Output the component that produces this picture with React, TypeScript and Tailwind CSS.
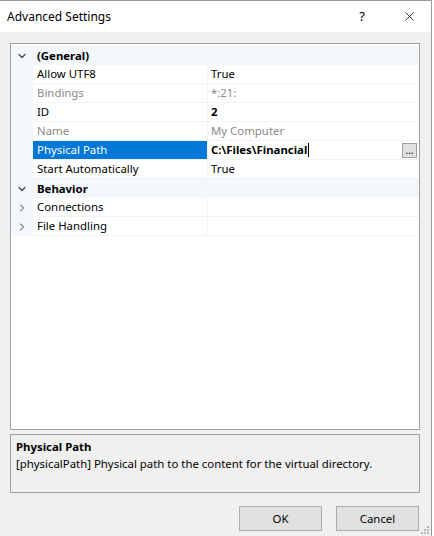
import { ChevronDown, ChevronRight, X } from 'lucide-react';

type Row =
  | { kind: 'cat'; label: string }
  | { kind: 'item'; name: string; value?: string; dim?: boolean; bold?: boolean; selected?: boolean; expand?: boolean };

const rows: Row[] = [
  { kind: 'cat', label: '(General)' },
  { kind: 'item', name: 'Allow UTF8', value: 'True' },
  { kind: 'item', name: 'Bindings', value: '*:21:', dim: true },
  { kind: 'item', name: 'ID', value: '2', bold: true },
  { kind: 'item', name: 'Name', value: 'My Computer', dim: true },
  { kind: 'item', name: 'Physical Path', value: 'C:\\Files\\Financial', selected: true, bold: true },
  { kind: 'item', name: 'Start Automatically', value: 'True' },
  { kind: 'cat', label: 'Behavior' },
  { kind: 'item', name: 'Connections', expand: true },
  { kind: 'item', name: 'File Handling', expand: true },
];

function GridRow({ row }: { row: Row }) {
  if (row.kind === 'cat') {
    return (
      <div className="flex h-[19px] items-center bg-[#f3f6fb]">
        <div className="flex w-[22px] justify-center">
          <ChevronDown size={12} strokeWidth={2.6} className="text-[#4a4a4a]" />
        </div>
        <span className="pl-[4px] font-bold text-black">{row.label}</span>
      </div>
    );
  }
  return (
    <div className="flex h-[19px]">
      <div className="flex w-[22px] items-center justify-center bg-[#f3f6fb]">
        {row.expand && <ChevronRight size={12} strokeWidth={2.2} className="text-[#8c8c8c]" />}
      </div>
      <div
        className={`flex w-[174px] items-center border-b border-[#f0f3f8] pl-[4px] ${
          row.selected ? 'bg-[#0078d7] text-white' : row.dim ? 'text-[#8a8a8a]' : 'text-black'
        }`}
      >
        {row.name}
      </div>
      <div className="w-px bg-[#f0f3f8]" />
      <div
        className={`flex flex-1 items-center border-b border-[#f0f3f8] pl-[3px] ${
          row.dim ? 'text-[#8a8a8a]' : 'text-black'
        } ${row.bold ? 'font-bold' : ''}`}
      >
        <span>{row.value}</span>
        {row.selected && <span className="ml-[1px] h-[14px] w-px bg-black" />}
        {row.selected && (
          <span className="ml-auto mr-[2px] flex h-[15px] w-[15px] items-end justify-center border border-[#a0a0a0] bg-[#e1e1e1] pb-[2px] text-[10px] leading-none font-normal">
            ...
          </span>
        )}
      </div>
    </div>
  );
}

export default function App() {
  return (
    <div
      className="h-[536px] w-[434px] bg-white text-[11.4px] leading-none"
      style={{ fontFamily: '"Noto Sans", sans-serif' }}
    >
      <div className="flex h-[536px] w-[432px] flex-col border-t border-r border-[#9a9a9a]">
        {/* title bar */}
        <div className="flex h-[31px] items-center bg-white">
          <span className="pl-[7px] text-[12px] text-black">Advanced Settings</span>
          <span className="ml-auto mr-[37px] text-[13px] text-black">?</span>
          <X size={15} strokeWidth={1.2} className="mr-[14px] text-black" />
        </div>

        {/* body */}
        <div className="relative flex flex-1 flex-col bg-[#f0f0f0] px-[10px] pt-[11px]">
          <div className="flex h-[387px] w-[410px] flex-col border border-[#a0a0a0] bg-white pt-[2px]">
            {rows.map((r, i) => (
              <GridRow key={i} row={r} />
            ))}
          </div>

          <div className="mt-[4px] h-[59px] w-[410px] border border-[#a0a0a0] px-[5px] pt-[6px]">
            <div className="font-bold text-black">Physical Path</div>
            <div className="mt-[6px] text-black">
              [physicalPath] Physical path to the content for the virtual directory.
            </div>
          </div>

          <div className="mt-[13px] flex w-[409px] justify-end gap-[14px]">
            <button className="h-[25px] w-[83px] border border-[#adadad] bg-[#e1e1e1] text-black">OK</button>
            <button className="h-[25px] w-[83px] border border-[#adadad] bg-[#e1e1e1] text-black">Cancel</button>
          </div>

          {/* size grip */}
          <div className="absolute right-[2px] bottom-[2px] grid grid-cols-3 gap-[1px]">
            <span className="h-[2px] w-[2px]" />
            <span className="h-[2px] w-[2px]" />
            <span className="h-[2px] w-[2px] bg-[#b8b8b8]" />
            <span className="h-[2px] w-[2px]" />
            <span className="h-[2px] w-[2px] bg-[#b8b8b8]" />
            <span className="h-[2px] w-[2px] bg-[#b8b8b8]" />
            <span className="h-[2px] w-[2px] bg-[#b8b8b8]" />
            <span className="h-[2px] w-[2px] bg-[#b8b8b8]" />
            <span className="h-[2px] w-[2px] bg-[#b8b8b8]" />
          </div>
        </div>
      </div>
    </div>
  );
}
